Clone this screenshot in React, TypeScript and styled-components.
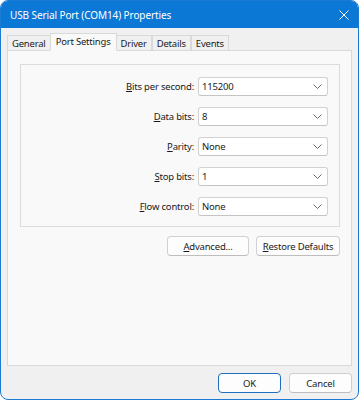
import React from 'react';
import styled, { createGlobalStyle } from 'styled-components';

const GlobalStyle = createGlobalStyle`
  html, body {
    margin: 0;
    padding: 0;
    background: #ffffff;
  }
  body {
    font-family: "Noto Sans", "Liberation Sans", sans-serif;
    font-size: 9.5px;
    letter-spacing: -0.2px;
    color: #1a1a1a;
  }
`;

const Window = styled.div`
  width: 359px;
  height: 400px;
  box-sizing: border-box;
  border: 1px solid #1b7bd4;
  border-radius: 8px;
  overflow: hidden;
  background: #f0f0f0;
  display: flex;
  flex-direction: column;
`;

const TitleBar = styled.div`
  height: 27px;
  flex: none;
  background: #0b78d6;
  color: #ffffff;
  display: flex;
  align-items: center;
  justify-content: space-between;
  padding: 0 8px 0 9px;
  font-size: 10px;
  letter-spacing: -0.1px;
`;

const CloseButton = styled.div`
  width: 12px;
  height: 12px;
  display: flex;
  align-items: center;
  justify-content: center;
`;

const Body = styled.div`
  flex: 1;
  display: flex;
  flex-direction: column;
  padding: 5px 6px 0 6px;
`;

const TabStrip = styled.div`
  display: flex;
  align-items: flex-end;
  height: 18px;
  position: relative;
  z-index: 1;
  margin-bottom: -1px;
`;

const Tab = styled.div<{ $active?: boolean }>`
  box-sizing: border-box;
  height: ${(p) => (p.$active ? '18px' : '16px')};
  padding: ${(p) => (p.$active ? '0 5px 2px' : '0 4px')};
  margin: ${(p) => (p.$active ? '0 -1px' : '0')};
  display: flex;
  align-items: center;
  background: ${(p) => (p.$active ? '#f9f9f9' : '#f0f0f0')};
  border: 1px solid #d9d9d9;
  border-bottom: ${(p) => (p.$active ? '1px solid #f9f9f9' : '1px solid #d9d9d9')};
  position: relative;
  z-index: ${(p) => (p.$active ? 2 : 1)};
  & + & {
    border-left: ${(p) => (p.$active ? '1px solid #d9d9d9' : 'none')};
  }
`;

const Panel = styled.div`
  box-sizing: border-box;
  height: 316px;
  background: #f9f9f9;
  border: 1px solid #d9d9d9;
  padding: 13px 11px 0 12px;
  display: flex;
  flex-direction: column;
`;

const GroupBox = styled.div`
  box-sizing: border-box;
  height: 163px;
  border: 1px solid #dcdcdc;
  padding: 12px 11px 0 0;
  display: flex;
  flex-direction: column;
  gap: 11px;
`;

const FieldRow = styled.div`
  display: flex;
  align-items: center;
  justify-content: flex-end;
  gap: 4px;
`;

const Label = styled.label`
  text-align: right;
`;

const Combo = styled.div`
  box-sizing: border-box;
  width: 130px;
  height: 19px;
  background: #ffffff;
  border: 1px solid #d2d2d2;
  border-bottom-color: #c4c4c4;
  border-radius: 3px;
  display: flex;
  align-items: center;
  justify-content: space-between;
  padding: 0 5px 0 3px;
`;

const ButtonRow = styled.div<{ $gap: number }>`
  display: flex;
  justify-content: flex-end;
  gap: ${(p) => p.$gap}px;
`;

const Button = styled.div<{ $width: number; $default?: boolean }>`
  box-sizing: border-box;
  width: ${(p) => p.$width}px;
  height: 20px;
  background: #fdfdfd;
  border: 1px solid ${(p) => (p.$default ? '#1f6fc0' : '#d0d0d0')};
  border-bottom-color: ${(p) => (p.$default ? '#1f6fc0' : '#bdbdbd')};
  border-radius: 4px;
  display: flex;
  align-items: center;
  justify-content: center;
`;

const PanelButtons = styled(ButtonRow)`
  margin-top: 9px;
`;

const DialogButtons = styled(ButtonRow)`
  margin-top: 7px;
`;

const Chevron = () => (
  <svg width="9" height="5" viewBox="0 0 9 5">
    <path d="M0.5 0.5 L4.5 4.5 L8.5 0.5" fill="none" stroke="#6a6a6a" strokeWidth="1" />
  </svg>
);

const fields = [
  { key: 'B', rest: 'its per second:', value: '115200' },
  { key: 'D', rest: 'ata bits:', value: '8' },
  { key: 'P', rest: 'arity:', value: 'None' },
  { key: 'S', rest: 'top bits:', value: '1' },
  { key: 'F', rest: 'low control:', value: 'None' },
];

const tabs = ['General', 'Port Settings', 'Driver', 'Details', 'Events'];

export default function App() {
  return (
    <>
      <GlobalStyle />
      <Window>
        <TitleBar>
          <span>USB Serial Port (COM14) Properties</span>
          <CloseButton>
            <svg width="10" height="10" viewBox="0 0 10 10">
              <path d="M0.5 0.5 L9.5 9.5 M9.5 0.5 L0.5 9.5" stroke="#ffffff" strokeWidth="1" />
            </svg>
          </CloseButton>
        </TitleBar>
        <Body>
          <TabStrip>
            {tabs.map((t) => (
              <Tab key={t} $active={t === 'Port Settings'}>
                {t}
              </Tab>
            ))}
          </TabStrip>
          <Panel>
            <GroupBox>
              {fields.map((f) => (
                <FieldRow key={f.key}>
                  <Label>
                    <u>{f.key}</u>
                    {f.rest}
                  </Label>
                  <Combo>
                    <span>{f.value}</span>
                    <Chevron />
                  </Combo>
                </FieldRow>
              ))}
            </GroupBox>
            <PanelButtons $gap={7}>
              <Button $width={82}>
                <span>
                  <u>A</u>dvanced...
                </span>
              </Button>
              <Button $width={84}>
                <span>
                  <u>R</u>estore Defaults
                </span>
              </Button>
            </PanelButtons>
          </Panel>
          <DialogButtons $gap={8}>
            <Button $width={63} $default>
              OK
            </Button>
            <Button $width={63}>Cancel</Button>
          </DialogButtons>
        </Body>
      </Window>
    </>
  );
}
